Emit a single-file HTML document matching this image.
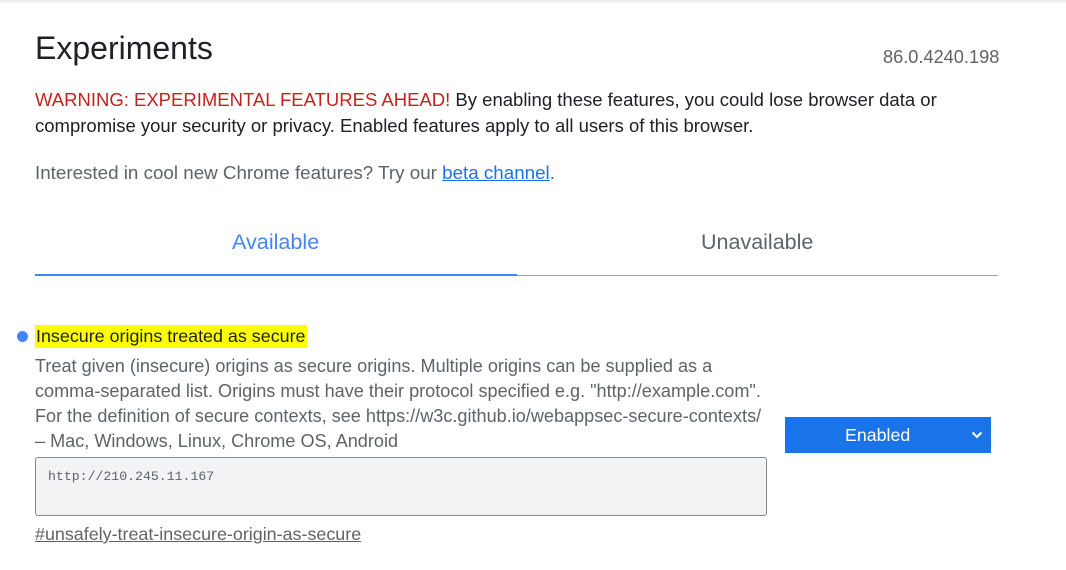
<!DOCTYPE html>
<html><head><meta charset="utf-8"><style>
*{margin:0;padding:0;box-sizing:border-box}
body{width:1066px;height:570px;background:#fff;font-family:"Liberation Sans",sans-serif;color:#5f6368;position:relative;overflow:hidden}
.a{position:absolute;white-space:nowrap}
.topbar{position:absolute;left:0;top:0;width:1066px;height:4px;background:linear-gradient(#e8e8e8,#fff)}
</style></head><body>
<div class="topbar"></div>
<div class="a" style="left:35px;top:30px;font-size:32px;color:#202124">Experiments</div>
<div class="a" style="left:883px;top:47px;font-size:18.2px;color:#5f6368">86.0.4240.198</div>
<div class="a" style="left:35px;top:87px;font-size:18.5px;line-height:26px;color:#202124"><span style="color:#c5221f">WARNING: EXPERIMENTAL FEATURES AHEAD!</span> By enabling these features, you could lose browser data or<br>compromise your security or privacy. Enabled features apply to all users of this browser.</div>
<div class="a" style="left:35px;top:162px;font-size:18.8px;color:#5f6368">Interested in cool new Chrome features? Try our <span style="color:#1a73e8;text-decoration:underline">beta channel</span>.</div>
<div class="a" style="left:232px;top:229px;font-size:21.6px;color:#4285f4">Available</div>
<div class="a" style="left:701px;top:230px;font-size:21.5px;color:#5f6368">Unavailable</div>
<div style="position:absolute;left:35px;top:275px;width:963px;height:1px;background:#9aa0a6"></div>
<div style="position:absolute;left:35px;top:274px;width:482px;height:2px;background:#4285f4"></div>
<div style="position:absolute;left:17px;top:331px;width:11px;height:11px;border-radius:50%;background:#4285f4"></div>
<div class="a" style="left:35px;top:325px;height:23px;padding:1px 1px;background:#ffff00;font-size:17.9px;color:#202124">Insecure origins treated as secure</div>
<div class="a" style="left:35px;top:354px;font-size:18.1px;line-height:25px;color:#5f6368">Treat given (insecure) origins as secure origins. Multiple origins can be supplied as a<br>comma-separated list. Origins must have their protocol specified e.g. "http://example.com".<br>For the definition of secure contexts, see https://w3c.github.io/webappsec-secure-contexts/<br>– Mac, Windows, Linux, Chrome OS, Android</div>
<div style="position:absolute;left:35px;top:457px;width:732px;height:59px;background:#f1f3f4;border:1px solid #888;border-radius:3px"></div>
<div class="a" style="left:48px;top:469px;font-family:'Liberation Mono',monospace;font-size:13.2px;color:#5f6368">http://210.245.11.167</div>
<div class="a" style="left:35px;top:524px;font-size:17.9px;color:#5f6368;text-decoration:underline">#unsafely-treat-insecure-origin-as-secure</div>
<div style="position:absolute;left:785px;top:417px;width:206px;height:36px;background:#1a73e8;color:#fff;font-size:17.8px">
<span class="a" style="left:60px;top:8px">Enabled</span>
<svg style="position:absolute;left:186px;top:14px" width="12" height="8" viewBox="0 0 12 8"><path d="M1.5 1.5L6 6l4.5-4.5" stroke="#fff" stroke-width="2" fill="none"/></svg>
</div>
</body></html>
